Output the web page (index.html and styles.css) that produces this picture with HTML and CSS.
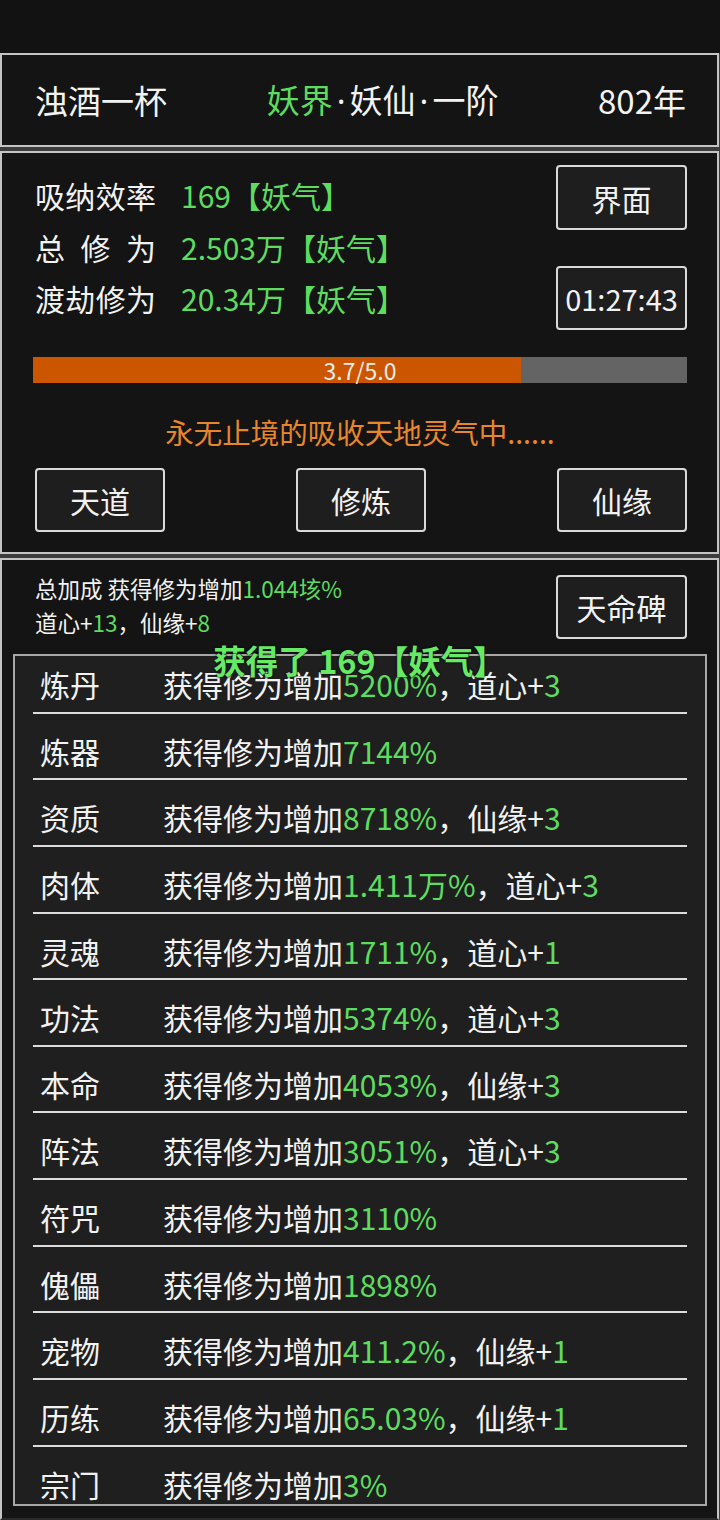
FILE: index.html
```html
<!DOCTYPE html>
<html lang="zh">
<head>
<meta charset="utf-8">
<link rel="stylesheet" href="styles.css">
</head>
<body>
<div class="statusbar"></div>
<div class="stack">
  <section class="panel head">
    <span class="name">浊酒一杯</span>
    <span class="realm"><span class="g">妖界</span><span class="dot">·</span>妖仙<span class="dot">·</span>一阶</span>
    <span class="age">802年</span>
  </section>

  <section class="panel main">
    <div class="stats-row">
      <div class="stats">
        <div class="stat"><span class="lbl">吸纳效率</span><span class="g">169【妖气】</span></div>
        <div class="stat"><span class="lbl">总 修 为</span><span class="g">2.503万【妖气】</span></div>
        <div class="stat"><span class="lbl">渡劫修为</span><span class="g">20.34万【妖气】</span></div>
      </div>
      <div class="side-btns">
        <div class="btn">界面</div>
        <div class="btn timer">01:27:43</div>
      </div>
    </div>
    <div class="progress">
      <div class="fill" style="width:74.6%"></div>
      <span class="ptext">3.7/5.0</span>
    </div>
    <div class="msg">永无止境的吸收天地灵气中......</div>
    <div class="btn-row">
      <div class="btn">天道</div>
      <div class="btn">修炼</div>
      <div class="btn">仙缘</div>
    </div>
  </section>

  <section class="panel bonus">
    <div class="bonus-head">
      <div class="summary">
        <div>总加成 获得修为增加<span class="g">1.044垓%</span></div>
        <div>道心+<span class="g">13</span>，仙缘+<span class="g">8</span></div>
      </div>
      <div class="btn">天命碑</div>
    </div>
    <div class="listbox">
      <div class="list">
        <div class="row"><span class="k">炼丹</span><span>获得修为增加<span class="g">5200%</span>，道心+<span class="g">3</span></span></div>
        <div class="row"><span class="k">炼器</span><span>获得修为增加<span class="g">7144%</span></span></div>
        <div class="row"><span class="k">资质</span><span>获得修为增加<span class="g">8718%</span>，仙缘+<span class="g">3</span></span></div>
        <div class="row"><span class="k">肉体</span><span>获得修为增加<span class="g">1.411万%</span>，道心+<span class="g">3</span></span></div>
        <div class="row"><span class="k">灵魂</span><span>获得修为增加<span class="g">1711%</span>，道心+<span class="g">1</span></span></div>
        <div class="row"><span class="k">功法</span><span>获得修为增加<span class="g">5374%</span>，道心+<span class="g">3</span></span></div>
        <div class="row"><span class="k">本命</span><span>获得修为增加<span class="g">4053%</span>，仙缘+<span class="g">3</span></span></div>
        <div class="row"><span class="k">阵法</span><span>获得修为增加<span class="g">3051%</span>，道心+<span class="g">3</span></span></div>
        <div class="row"><span class="k">符咒</span><span>获得修为增加<span class="g">3110%</span></span></div>
        <div class="row"><span class="k">傀儡</span><span>获得修为增加<span class="g">1898%</span></span></div>
        <div class="row"><span class="k">宠物</span><span>获得修为增加<span class="g">411.2%</span>，仙缘+<span class="g">1</span></span></div>
        <div class="row"><span class="k">历练</span><span>获得修为增加<span class="g">65.03%</span>，仙缘+<span class="g">1</span></span></div>
        <div class="row"><span class="k">宗门</span><span>获得修为增加<span class="g">3%</span></span></div>
      </div>
    </div>
    <div class="toast">获得了 169【妖气】</div>
  </section>
</div>
</body>
</html>
```

FILE: styles.css
```css
* { box-sizing: border-box; }
html, body {
  margin: 0;
  padding: 0;
  width: 720px;
  height: 1520px;
  overflow: hidden;
  background: #121212;
  color: #f2f2f2;
  font-family: "Noto Sans CJK SC", "Noto Sans", sans-serif;
}
.g { color: #5ddc5f; }

.statusbar { height: 53px; background: #121212; }

.stack {
  background: #3c3c3c;
  display: flex;
  flex-direction: column;
  gap: 4px;
  padding-right: 1px;
  height: 1467px;
}
.panel {
  background: #141414;
  border: 2px solid #c4c4c4;
}

/* header */
.head {
  height: 94px;
  display: flex;
  align-items: center;
  justify-content: space-between;
  padding: 0 31px 0 33px;
  font-size: 33px;
  line-height: 40px;
}
.dot {
  font-family: "Noto Sans", sans-serif;
  margin: 0 4px;
}

/* main */
.main {
  height: 403px;
  padding: 12px 30px 0 31px;
}
.stats-row {
  display: flex;
  justify-content: space-between;
  align-items: center;
}
.stats { padding-left: 2px; font-size: 30px; }
.stat { display: flex; line-height: 51.5px; height: 51.5px; white-space: nowrap; }
.lbl {
  flex: 0 0 121px;
  width: 121px;
  margin-right: 25px;
  white-space: nowrap;
  text-align: justify;
  text-align-last: justify;
}
.side-btns {
  display: flex;
  flex-direction: column;
  gap: 36px;
}
.btn {
  width: 131px;
  height: 65px;
  border: 2px solid #dadada;
  border-radius: 4px;
  background: #1e1e1e;
  display: flex;
  align-items: center;
  justify-content: center;
  font-size: 30px;
  color: #f2f2f2;
}
.timer { height: 64px; font-size: 29px; }

.progress {
  position: relative;
  margin-top: 27px;
  height: 26px;
  background: #646464;
  display: flex;
  align-items: center;
  justify-content: center;
}
.fill {
  position: absolute;
  left: 0; top: 0; bottom: 0;
  background: #cc5500;
}
.ptext {
  position: relative;
  font-size: 23px;
  line-height: 26px;
  color: #eeeeee;
}
.msg {
  margin-top: 29px;
  height: 40px;
  line-height: 40px;
  text-align: center;
  font-size: 28.5px;
  color: #e8862a;
}
.btn-row {
  margin-top: 16px;
  padding-left: 2px;
  display: flex;
  justify-content: space-between;
}
.btn-row .btn { height: 64px; width: 130px; }

/* bonus */
.bonus {
  position: relative;
  flex: 1;
  border-bottom-color: #2a2a2a;
}
.bonus-head {
  display: flex;
  justify-content: space-between;
  align-items: flex-start;
  padding: 11px 30px 0 33px;
}
.summary { font-size: 22.5px; line-height: 34px; }
.bonus-head .btn { height: 64px; margin-top: 4px; }

.listbox {
  margin: 15px 10px 0 11px;
  height: 852px;
  border: 2px solid #a8a8a8;
  background: #1f1f1f;
  overflow: hidden;
  padding: 0 18px;
}
.list { margin-top: -9px; }
.row {
  height: 66.65px;
  border-bottom: 2px solid #dcdcdc;
  padding: 19px 0 0 7px;
  display: flex;
  font-size: 30px;
  line-height: 36px;
}
.k { width: 123px; }

.toast {
  position: absolute;
  left: 0; right: 0;
  top: 80px;
  text-align: center;
  font-size: 32.5px;
  font-weight: bold;
  line-height: 40px;
  color: #66ea66;
  text-shadow: 0 0 2px #0c0c0c, 0 0 2px #0c0c0c;
}
```
